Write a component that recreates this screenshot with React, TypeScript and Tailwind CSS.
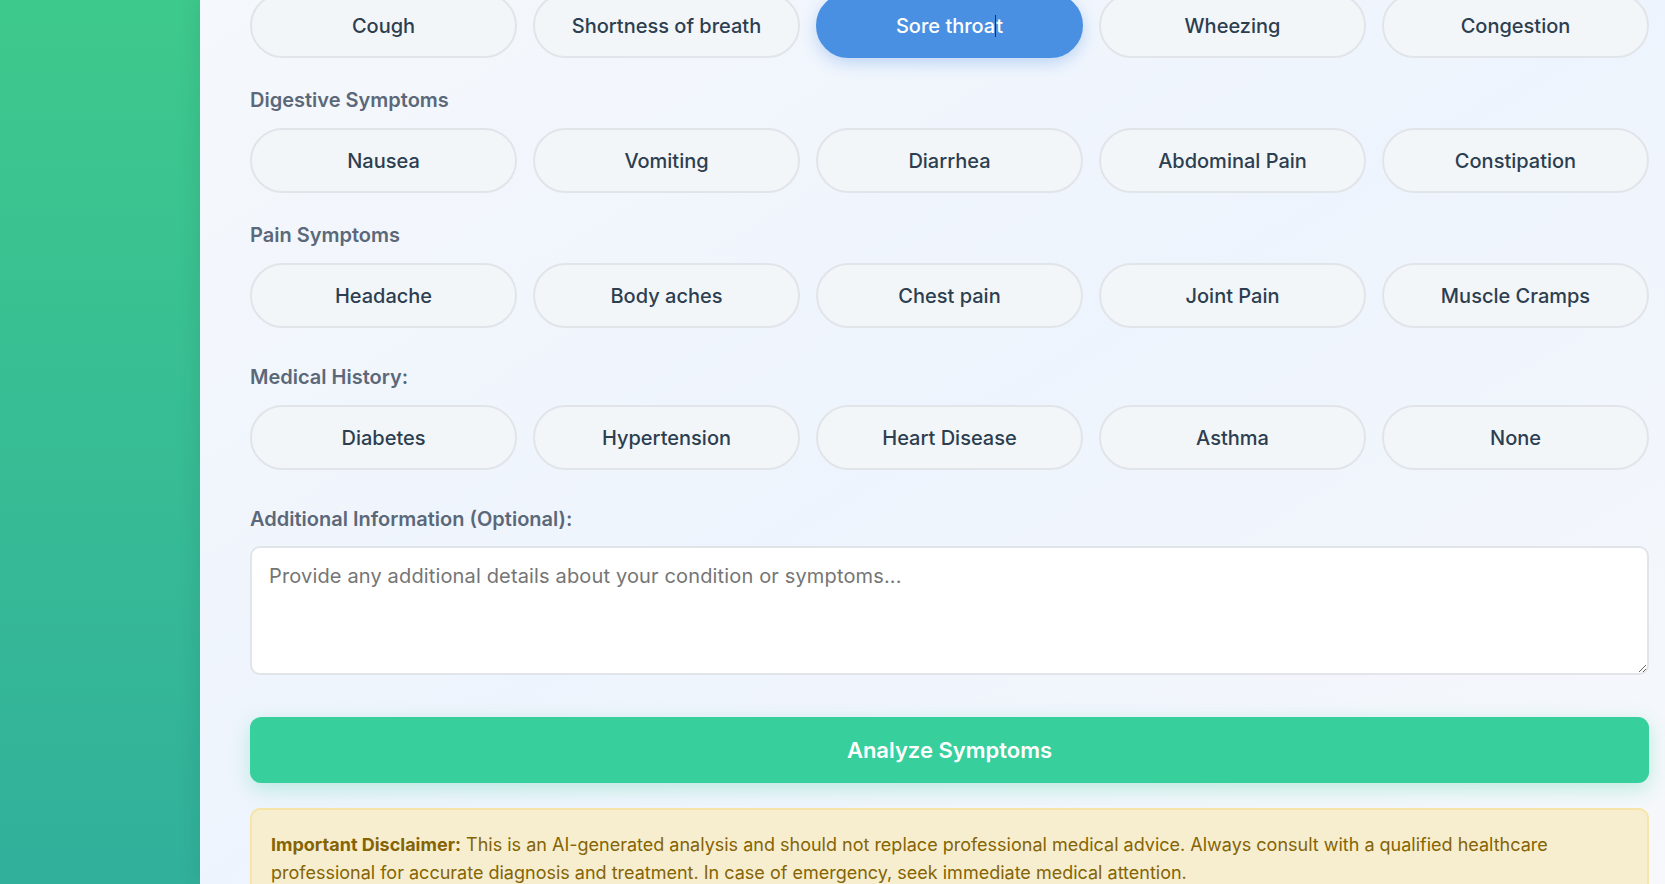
import React from "react";

const groups: { label: string; items: string[]; gapTop: string }[] = [
  { label: "", items: ["Cough", "Shortness of breath", "Sore throat", "Wheezing", "Congestion"], gapTop: "" },
  { label: "Digestive Symptoms", items: ["Nausea", "Vomiting", "Diarrhea", "Abdominal Pain", "Constipation"], gapTop: "mt-[30px]" },
  { label: "Pain Symptoms", items: ["Headache", "Body aches", "Chest pain", "Joint Pain", "Muscle Cramps"], gapTop: "mt-[30px]" },
  { label: "Medical History:", items: ["Diabetes", "Hypertension", "Heart Disease", "Asthma", "None"], gapTop: "mt-[37px]" },
];

function Chip({ text }: { text: string }) {
  const selected = text === "Sore throat";
  if (selected) {
    return (
      <button className="h-[65px] rounded-full border-2 border-[#4a90e2] bg-[#4a90e2] text-white text-[20px] font-medium shadow-[0_5px_16px_rgba(74,144,226,0.32)] flex items-center justify-center">
        <span className="relative">
          Sore throa
          <span className="inline-block w-px h-[22px] bg-[#1f2f45] align-middle -mt-[3px]" />
          t
        </span>
      </button>
    );
  }
  return (
    <button className="h-[65px] rounded-full border-2 border-[#e1e5ea] bg-[#f3f6f9] text-[#2c3e50] text-[20px] font-medium flex items-center justify-center">
      {text}
    </button>
  );
}

export default function App() {
  return (
    <div
      className="w-[1665px] h-[884px] overflow-hidden flex"
      style={{ fontFamily: "Inter, 'Noto Sans', sans-serif" }}
    >
      <div className="w-[200px] shrink-0 h-full bg-gradient-to-b from-[#3ec98c] to-[#31b09b]" />
      <div className="flex-1 h-full bg-gradient-to-br from-[#f5f8fc] via-[#eef4fd] to-[#f6f8fb] shadow-[-6px_0_18px_rgba(0,0,0,0.06)] pl-[50px] pr-[16px]">
        <div className="-mt-[7px]">
          {groups.map((g, i) => (
            <div key={i} className={g.gapTop}>
              {g.label && (
                <div className="text-[20px] leading-[24px] font-semibold text-[#5b6879] mb-[16px]">
                  {g.label}
                </div>
              )}
              <div className="grid grid-cols-5 gap-4">
                {g.items.map((t) => (
                  <Chip key={t} text={t} />
                ))}
              </div>
            </div>
          ))}
          <div className="mt-[37px]">
            <div className="text-[20px] leading-[24px] font-semibold text-[#5b6879] mb-[15px]">
              Additional Information (Optional):
            </div>
            <textarea
              className="block w-full h-[129px] rounded-[10px] border-2 border-[#e1e5ea] bg-white pl-[17px] pr-[17px] pt-[16px] pb-[15px] text-[20px] leading-[24px] tracking-[0.15px] font-normal text-[#2c3e50] placeholder:text-[#757575] outline-none"
              placeholder="Provide any additional details about your condition or symptoms..."
            />
          </div>
          <button className="mt-[42px] w-full h-[66px] rounded-[11px] bg-[#37cf9c] text-white text-[22px] font-semibold shadow-[0_6px_20px_rgba(55,207,156,0.3)]">
            Analyze Symptoms
          </button>
          <div className="mt-[25px] rounded-[10px] border-2 border-[#f7e5a8] bg-[#f7eecf] px-[19px] pt-[21px] pb-[19px] text-[18px] leading-[28px] text-[#856404]">
            <strong className="font-bold">Important Disclaimer:</strong> This is an AI-generated analysis and should not replace professional medical advice. Always consult with a qualified healthcare professional for accurate diagnosis and treatment. In case of emergency, seek immediate medical attention.
          </div>
        </div>
      </div>
    </div>
  );
}
